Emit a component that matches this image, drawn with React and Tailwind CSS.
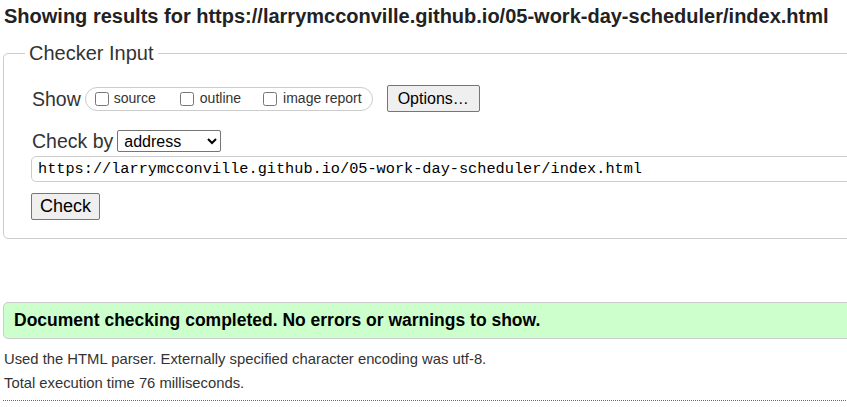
import React, { useState } from 'react';

export default function App() {
  const [show, setShow] = useState({ source: false, outline: false, image: false });
  const [url, setUrl] = useState('https://larrymcconville.github.io/05-work-day-scheduler/index.html');

  const toggle = (key) => setShow({ ...show, [key]: !show[key] });

  return (
    <div className="w-[847px] h-[407px] overflow-hidden bg-white font-['Liberation_Sans',Arial,sans-serif] text-[#222]">
      <div className="w-[1000px] pl-[4px]">
        <h2 className="pt-[5px] text-[20px] leading-[23px] font-bold text-[#222]">
          Showing results for https://larrymcconville.github.io/05-work-day-scheduler/index.html
        </h2>

        {/* Checker input */}
        <fieldset className="mt-[14px] -ml-[1px] border border-[#ccc] rounded-[5px] pl-[28px] pr-4 pt-[20px] pb-[18px]">
          <legend className="-ml-[7px] px-[4px] text-[20px] leading-[23px] text-[#333]">Checker Input</legend>

          <div className="flex items-center h-[27px]">
            <span className="text-[19.5px] leading-[22px] text-[#333] mr-[4px]">Show</span>
            <div className="flex items-center h-[24px] border border-[#ccc] rounded-full pl-[9px] pr-[10px] text-[14px] text-[#333]">
              <label className="flex items-center">
                <input type="checkbox" checked={show.source} onChange={() => toggle('source')} className="w-[14px] h-[14px] m-0 mr-[5px]" />
                source
              </label>
              <label className="flex items-center ml-[24px]">
                <input type="checkbox" checked={show.outline} onChange={() => toggle('outline')} className="w-[14px] h-[14px] m-0 mr-[6px]" />
                outline
              </label>
              <label className="flex items-center ml-[22px]">
                <input type="checkbox" checked={show.image} onChange={() => toggle('image')} className="w-[14px] h-[14px] m-0 mr-[6px]" />
                image report
              </label>
            </div>
            <button type="button" className="ml-[14px] h-[27px] px-[10px] bg-[#efefef] border border-[#767676] rounded-[2px] text-[16px] text-black">
              Options…
            </button>
          </div>

          <div className="flex items-center mt-[18px] h-[22px]">
            <span className="text-[19.5px] leading-[22px] text-[#333] mr-[4px]">Check by</span>
            <select className="w-[104px] h-[22px] border border-[#767676] rounded-[2px] text-[16px] text-black pl-[2px] bg-white">
              <option>address</option>
              <option>file upload</option>
              <option>text input</option>
            </select>
          </div>

          <input
            type="text"
            value={url}
            onChange={(e) => setUrl(e.target.value)}
            className="block mt-[4px] -ml-[1px] w-[960px] h-[26px] border border-[#ccc] rounded-[5px] px-[6px] font-['Liberation_Mono','DejaVu_Sans_Mono',monospace] text-[15.25px] text-black outline-none"
          />

          <button type="button" className="block mt-[11px] -ml-[1px] h-[27px] px-[8px] bg-[#efefef] border border-[#767676] rounded-[2px] text-[18px] leading-[21px] text-black">
            Check
          </button>
        </fieldset>

        {/* Result */}
        <div className="mt-[63px] -ml-[1px] h-[37px] flex items-center border border-[#ccc] rounded-[5px] bg-[#ccffcc] pl-[10px]">
          <p className="text-[17.5px] font-bold text-black">Document checking completed. No errors or warnings to show.</p>
        </div>

        <p className="mt-[8px] text-[14.8px] leading-[24px] text-[#333]">Used the HTML parser. Externally specified character encoding was utf-8.</p>
        <p className="text-[14.8px] leading-[24px] text-[#333]">Total execution time 76 milliseconds.</p>
        <div className="mt-[5px] -ml-[1px] border-t border-dotted border-[#666]" />
      </div>
    </div>
  );
}
